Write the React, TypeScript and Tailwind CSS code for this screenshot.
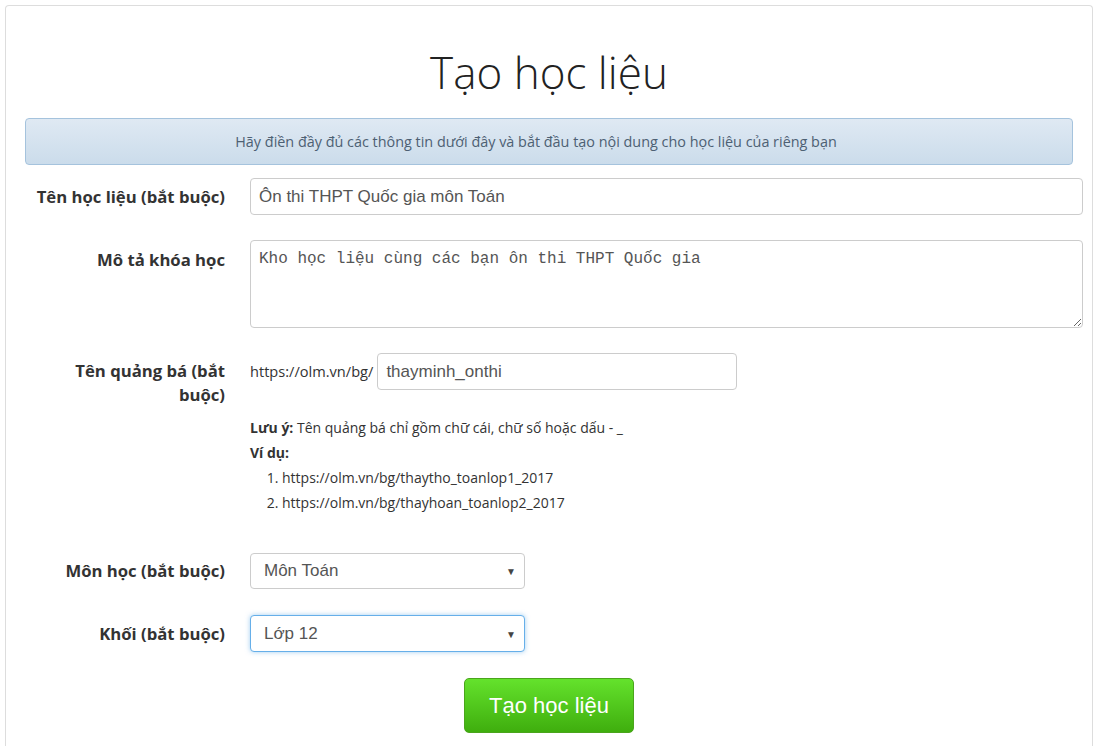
import { useState } from "react";

const labelCls =
  "w-[200px] shrink-0 text-right text-[16.7px] font-bold leading-[24px] text-[#333]";

const SelectBox = ({
  value,
  options,
  focused,
  onChange,
}: {
  value: string;
  options: string[];
  focused?: boolean;
  onChange: (v: string) => void;
}) => (
  <div className="relative w-[275px]">
    <select
      value={value}
      onChange={(e) => onChange(e.target.value)}
      className={
        focused
          ? "h-[37px] w-full appearance-none rounded-[4px] border border-[#66afe9] bg-white pl-[13px] pr-8 text-[17px] text-[#555] shadow-[0_0_5px_rgba(102,175,233,0.6)] outline-none"
          : "h-[36px] w-full appearance-none rounded-[4px] border border-[#ccc] bg-white pl-[13px] pr-8 text-[17px] text-[#555] outline-none"
      }
      style={{ fontFamily: '"Liberation Sans", Arial, sans-serif' }}
    >
      {options.map((o) => (
        <option key={o}>{o}</option>
      ))}
    </select>
    <span className="pointer-events-none absolute right-[9px] top-1/2 -translate-y-1/2 text-[10px] text-[#444]">
      ▼
    </span>
  </div>
);

const App: React.FC = () => {
  const [name, setName] = useState("Ôn thi THPT Quốc gia môn Toán");
  const [desc, setDesc] = useState("Kho học liệu cùng các bạn ôn thi THPT Quốc gia");
  const [slug, setSlug] = useState("thayminh_onthi");
  const [subject, setSubject] = useState("Môn Toán");
  const [grade, setGrade] = useState("Lớp 12");

  return (
    <div
      className="min-h-screen bg-white pl-[5px] pr-[11px] pt-[5px] text-[#333]"
      style={{ fontFamily: '"Open Sans", "Noto Sans", sans-serif' }}
    >
      <div className="rounded-t-[4px] border border-b-0 border-[#ddd] px-[19px] pb-[20px]">
        <h1 className="pt-[38px] pb-[18px] text-center text-[44px] font-light leading-[56px] text-[#222]">
          Tạo học liệu
        </h1>

        <div className="flex h-[47px] items-center justify-center rounded-[4px] border border-[#a5c3dd] bg-[linear-gradient(to_bottom,#dfe9f3,#cbdceb)] pr-[26px] text-[14.4px] text-[#4d6073]">
          Hãy điền đầy đủ các thông tin dưới đây và bắt đầu tạo nội dung cho học liệu của riêng bạn
        </div>

        <div className="-mr-[10px] mt-[13px] flex flex-col">
          <div className="flex items-center gap-[25px]">
            <label className={labelCls}>Tên học liệu (bắt buộc)</label>
            <input
              value={name}
              onChange={(e) => setName(e.target.value)}
              className="h-[37px] flex-1 rounded-[4px] border border-[#ccc] px-[8px] text-[17px] text-[#555] outline-none"
              style={{ fontFamily: '"Liberation Sans", Arial, sans-serif' }}
            />
          </div>

          <div className="mt-[25px] flex items-start gap-[25px]">
            <label className={labelCls + " pt-[8px]"}>Mô tả khóa học</label>
            <textarea
              value={desc}
              onChange={(e) => setDesc(e.target.value)}
              className="h-[88px] flex-1 rounded-[4px] border border-[#ccc] px-[8px] py-[6px] text-[16px] leading-[24px] text-[#555] outline-none"
              style={{ fontFamily: '"Liberation Mono", "DejaVu Sans Mono", monospace' }}
            />
          </div>

          <div className="mt-[25px] flex items-start gap-[25px]">
            <label className={labelCls + " pl-[40px] pt-[6px]"}>Tên quảng bá (bắt buộc)</label>
            <div className="flex flex-col">
              <div className="flex items-center gap-[4px]">
                <span className="text-[14.6px] text-[#333]">https://olm.vn/bg/</span>
                <input
                  value={slug}
                  onChange={(e) => setSlug(e.target.value)}
                  className="h-[37px] w-[360px] rounded-[4px] border border-[#ccc] px-[8px] text-[17px] text-[#555] outline-none"
                  style={{ fontFamily: '"Liberation Sans", Arial, sans-serif' }}
                />
              </div>
              <div className="mt-[25px] text-[14px] leading-[25px] text-[#333]">
                <p>
                  <b>Lưu ý:</b> Tên quảng bá chỉ gồm chữ cái, chữ số hoặc dấu - _
                </p>
                <p>
                  <b>Ví dụ:</b>
                </p>
                <ol className="list-decimal pl-[32px]">
                  <li>https://olm.vn/bg/thaytho_toanlop1_2017</li>
                  <li>https://olm.vn/bg/thayhoan_toanlop2_2017</li>
                </ol>
              </div>
            </div>
          </div>

          <div className="mt-[38px] flex items-center gap-[25px]">
            <label className={labelCls}>Môn học (bắt buộc)</label>
            <SelectBox
              value={subject}
              options={["Môn Toán", "Môn Tiếng Việt", "Môn Tiếng Anh"]}
              onChange={setSubject}
            />
          </div>

          <div className="mt-[26px] flex items-center gap-[25px]">
            <label className={labelCls}>Khối (bắt buộc)</label>
            <SelectBox
              value={grade}
              options={["Lớp 10", "Lớp 11", "Lớp 12"]}
              focused
              onChange={setGrade}
            />
          </div>

          <div className="-ml-[10px] mt-[26px] flex justify-center">
            <button
              className="h-[55px] w-[170px] rounded-[5px] border border-[#4aa51c] bg-[linear-gradient(to_bottom,#64e22c,#3fae0e)] text-[22px] text-white"
              style={{ fontFamily: '"Liberation Sans", Arial, sans-serif' }}
            >
              Tạo học liệu
            </button>
          </div>
        </div>
      </div>
    </div>
  );
};

export default App;
